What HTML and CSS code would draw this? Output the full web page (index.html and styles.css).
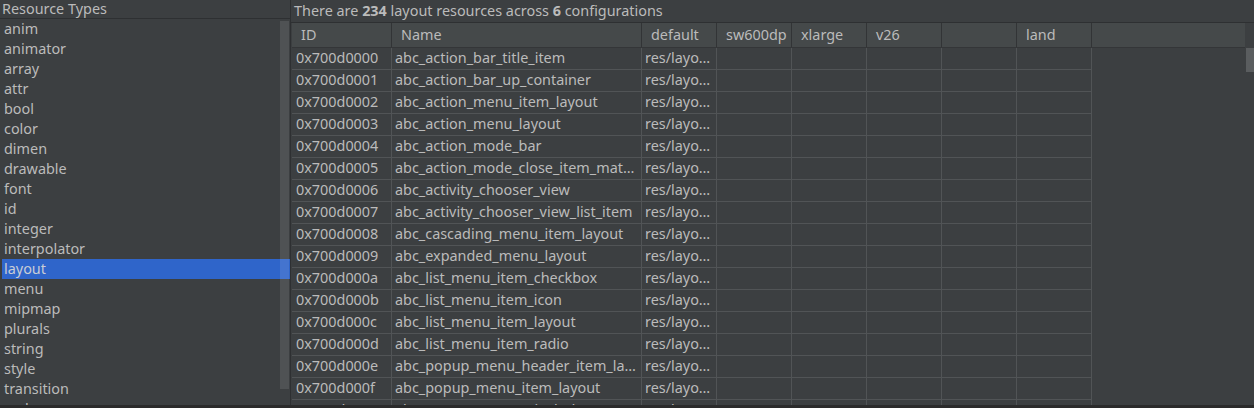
FILE: index.html
```html
<!DOCTYPE html>
<html>
<head>
<meta charset="utf-8">
<link rel="stylesheet" href="styles.css">
</head>
<body>
<div class="app">
  <aside class="types">
    <div class="types-title">Resource Types</div>
    <ul class="type-list">
      <li>anim</li><li>animator</li><li>array</li><li>attr</li><li>bool</li><li>color</li><li>dimen</li><li>drawable</li><li>font</li><li>id</li><li>integer</li><li>interpolator</li><li class="selected">layout</li><li>menu</li><li>mipmap</li><li>plurals</li><li>string</li><li>style</li><li>transition</li><li>xml</li>
    </ul>
    <div class="types-scroll"></div>
  </aside>
  <main class="resources">
    <div class="summary">There are <b>234</b> layout resources across <b>6</b> configurations</div>
    <div class="table">
      <div class="thead">
        <div class="th">ID</div><div class="th">Name</div><div class="th">default</div><div class="th">sw600dp</div><div class="th">xlarge</div><div class="th">v26</div><div class="th"></div><div class="th">land</div><div class="th filler"></div>
      </div>
      <div class="tbody">
        <div class="tr"><div class="td">0x700d0000</div><div class="td">abc_action_bar_title_item</div><div class="td">res/layout/abc_action_bar_title_item.xml</div><div class="td"></div><div class="td"></div><div class="td"></div><div class="td"></div><div class="td"></div></div>
        <div class="tr"><div class="td">0x700d0001</div><div class="td">abc_action_bar_up_container</div><div class="td">res/layout/abc_action_bar_up_container.xml</div><div class="td"></div><div class="td"></div><div class="td"></div><div class="td"></div><div class="td"></div></div>
        <div class="tr"><div class="td">0x700d0002</div><div class="td">abc_action_menu_item_layout</div><div class="td">res/layout/abc_action_menu_item_layout.xml</div><div class="td"></div><div class="td"></div><div class="td"></div><div class="td"></div><div class="td"></div></div>
        <div class="tr"><div class="td">0x700d0003</div><div class="td">abc_action_menu_layout</div><div class="td">res/layout/abc_action_menu_layout.xml</div><div class="td"></div><div class="td"></div><div class="td"></div><div class="td"></div><div class="td"></div></div>
        <div class="tr"><div class="td">0x700d0004</div><div class="td">abc_action_mode_bar</div><div class="td">res/layout/abc_action_mode_bar.xml</div><div class="td"></div><div class="td"></div><div class="td"></div><div class="td"></div><div class="td"></div></div>
        <div class="tr"><div class="td">0x700d0005</div><div class="td">abc_action_mode_close_item_material</div><div class="td">res/layout/abc_action_mode_close_item_material.xml</div><div class="td"></div><div class="td"></div><div class="td"></div><div class="td"></div><div class="td"></div></div>
        <div class="tr"><div class="td">0x700d0006</div><div class="td">abc_activity_chooser_view</div><div class="td">res/layout/abc_activity_chooser_view.xml</div><div class="td"></div><div class="td"></div><div class="td"></div><div class="td"></div><div class="td"></div></div>
        <div class="tr"><div class="td">0x700d0007</div><div class="td">abc_activity_chooser_view_list_item</div><div class="td">res/layout/abc_activity_chooser_view_list_item.xml</div><div class="td"></div><div class="td"></div><div class="td"></div><div class="td"></div><div class="td"></div></div>
        <div class="tr"><div class="td">0x700d0008</div><div class="td">abc_cascading_menu_item_layout</div><div class="td">res/layout/abc_cascading_menu_item_layout.xml</div><div class="td"></div><div class="td"></div><div class="td"></div><div class="td"></div><div class="td"></div></div>
        <div class="tr"><div class="td">0x700d0009</div><div class="td">abc_expanded_menu_layout</div><div class="td">res/layout/abc_expanded_menu_layout.xml</div><div class="td"></div><div class="td"></div><div class="td"></div><div class="td"></div><div class="td"></div></div>
        <div class="tr"><div class="td">0x700d000a</div><div class="td">abc_list_menu_item_checkbox</div><div class="td">res/layout/abc_list_menu_item_checkbox.xml</div><div class="td"></div><div class="td"></div><div class="td"></div><div class="td"></div><div class="td"></div></div>
        <div class="tr"><div class="td">0x700d000b</div><div class="td">abc_list_menu_item_icon</div><div class="td">res/layout/abc_list_menu_item_icon.xml</div><div class="td"></div><div class="td"></div><div class="td"></div><div class="td"></div><div class="td"></div></div>
        <div class="tr"><div class="td">0x700d000c</div><div class="td">abc_list_menu_item_layout</div><div class="td">res/layout/abc_list_menu_item_layout.xml</div><div class="td"></div><div class="td"></div><div class="td"></div><div class="td"></div><div class="td"></div></div>
        <div class="tr"><div class="td">0x700d000d</div><div class="td">abc_list_menu_item_radio</div><div class="td">res/layout/abc_list_menu_item_radio.xml</div><div class="td"></div><div class="td"></div><div class="td"></div><div class="td"></div><div class="td"></div></div>
        <div class="tr"><div class="td">0x700d000e</div><div class="td">abc_popup_menu_header_item_layout</div><div class="td">res/layout/abc_popup_menu_header_item_layout.xml</div><div class="td"></div><div class="td"></div><div class="td"></div><div class="td"></div><div class="td"></div></div>
        <div class="tr"><div class="td">0x700d000f</div><div class="td">abc_popup_menu_item_layout</div><div class="td">res/layout/abc_popup_menu_item_layout.xml</div><div class="td"></div><div class="td"></div><div class="td"></div><div class="td"></div><div class="td"></div></div>
        <div class="tr"><div class="td">0x700d0010</div><div class="td">abc_screen_content_include</div><div class="td">res/layout/abc_screen_content_include.xml</div><div class="td"></div><div class="td"></div><div class="td"></div><div class="td"></div><div class="td"></div></div>
      </div>
      <div class="table-scroll"><div class="table-thumb"></div></div>
    </div>
  </main>
</div>
<div class="bottom-edge"></div>
</body>
</html>
```
FILE: styles.css
```css
html, body {
  margin: 0;
  padding: 0;
  background: #3c3f41;
  color: #bbbbbb;
  font-family: "Noto Sans", "Open Sans", sans-serif;
  font-size: 14.4px;
  overflow: hidden;
}

.app {
  display: flex;
  height: 405px;
  overflow: hidden;
}

.types {
  position: relative;
  width: 290px;
  flex: none;
  border-right: 1px solid #2e3032;
  overflow: hidden;
}

.types-title {
  height: 18px;
  line-height: 18px;
  padding-left: 2px;
  border-bottom: 1px solid #2e3032;
  white-space: nowrap;
}

.type-list {
  list-style: none;
  margin: 0 0 0 2px;
  padding: 0;
}

.type-list li {
  height: 20px;
  line-height: 20px;
  padding-left: 2px;
}

.type-list li.selected {
  background: #2f65ca;
  color: #c8cdd6;
}

.types-scroll {
  position: absolute;
  left: 280px;
  top: 21px;
  width: 9px;
  height: 368px;
  background: rgba(255, 255, 255, 0.1);
}

.resources {
  flex: 1;
  min-width: 0;
  display: flex;
  flex-direction: column;
}

.summary {
  height: 22px;
  line-height: 22px;
  padding-left: 3px;
  border-bottom: 1px solid #2e3032;
  white-space: nowrap;
}

.summary b {
  font-weight: bold;
}

.table {
  position: relative;
  flex: 1;
  margin-left: 1px;
  overflow: hidden;
}

.thead {
  display: grid;
  grid-template-columns: 100px 250px repeat(6, 75px) 1fr;
  width: 953px;
  height: 24px;
  background: #45494a;
  border-bottom: 1px solid #343638;
}

.th {
  line-height: 24px;
  padding-left: 9px;
  border-right: 1px solid #323436;
  white-space: nowrap;
}

.th.filler {
  border-right: none;
}

.tr {
  display: grid;
  grid-template-columns: 100px 250px repeat(6, 75px);
  width: 800px;
  height: 21px;
  border-bottom: 1px solid #515456;
}

.td {
  line-height: 20px;
  padding-left: 3px;
  padding-right: 2px;
  border-right: 1px solid #515456;
  white-space: nowrap;
  overflow: hidden;
  text-overflow: ellipsis;
}

.td:first-child {
  padding-left: 4px;
}

.table-scroll {
  position: absolute;
  right: 0;
  top: 25px;
  width: 8px;
  bottom: 0;
}

.table-thumb {
  height: 24px;
  background: #5a5d5f;
}

.bottom-edge {
  height: 3px;
  background: #2b2b2b;
}
```
